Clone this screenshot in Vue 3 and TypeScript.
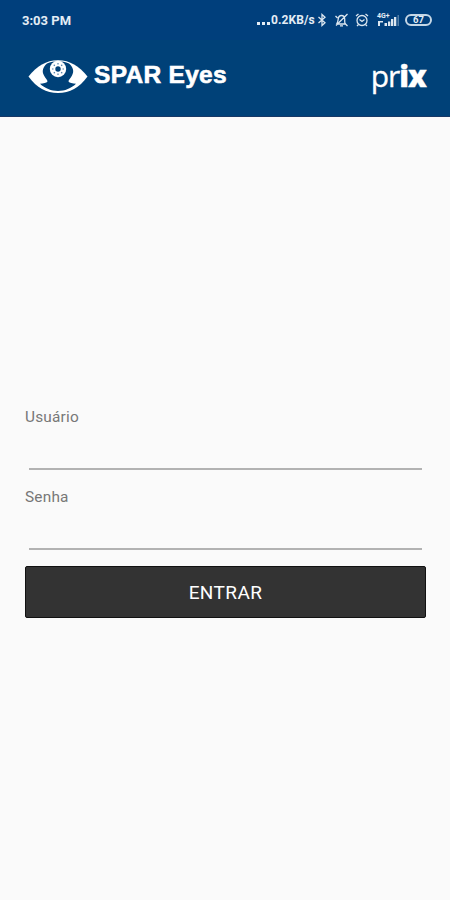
<script setup lang="ts">
import { ref } from 'vue'

const user = ref('')
const password = ref('')
const ticks = Array.from({ length: 8 }, (_, i) => i * 45)
</script>

<template>
  <main class="screen">
    <div class="status">
      <span class="time">3:03 PM</span>
      <span class="dots"><i></i><i></i><i></i></span>
      <span class="speed">0.2KB/s</span>
      <svg class="bt" width="10" height="14" viewBox="0 0 10 14">
        <path d="M1.5 4 8 9.8 5 12.5V1.5L8 4.2 1.5 10" />
      </svg>
      <svg class="bell" width="15" height="14" viewBox="0 0 15 14">
        <path d="M2.500 11h9c-1.500-1.500-.5-3-.8-5C10.500 3.500 9 2.500 7.500 2.500S4.500 3.500 4.200 6C4 8 4 9.500 2.500 11M6 12.800h3M1.500 3l2 2M11.500 11l2 2M13.500 1 2 12.500" />
      </svg>
      <svg class="alarm" width="14" height="14" viewBox="0 0 14 14">
        <circle cx="7" cy="7.500" r="5" /><path d="M1 3 3.500 1M13 3 10.500 1M4.500 6.500 7 8.500l2.500-2M3.500 11.500 2 13M10.500 11.500 12 13" />
      </svg>
      <span class="signal">
        <span class="net">4G+</span>
        <svg width="23" height="13" viewBox="0 0 23 13">
          <path class="fill" d="M1 7h5v1.500H3V12H1zM7.500 9H10v3H7.500zM11 7.500h2.300V12H11zM14 5h2.300v7H14zM17 3h2.300v9H17z" />
          <path class="faint" d="M20.500 1h1.500v11h-1.500z" />
        </svg>
      </span>
      <span class="battery"><b>67</b></span>
    </div>

    <header class="header">
      <svg class="eye" width="60" height="34" viewBox="0 0 60 34">
        <path class="white" d="M.5 16.500C9 6 18 .2 30 .2S51 6 59.500 16.500C51 28 42 33 30 33S9 28 .5 16.500Z" />
        <path class="navy" d="M19 3.500C22.500 2 26 1.300 30 1.300S37.500 2 41 3.500C45 7 46.500 11 44 15.500c-1.500 3-3.500 4.500-3.500 6 1 1.500 4 1.800 7.500 2.300C43 28.500 37 31 30 31S17 28.500 12 23.800c3.500-.5 6.500-.8 7.500-2.300 0-1.500-2-3-3.500-6C13.500 11 15 7 19 3.500Z" />
        <circle class="white" cx="30" cy="9" r="8.200" />
        <circle class="navy" cx="30" cy="9" r="2.700" />
        <path v-for="angle in ticks" :key="angle" class="tick" d="M30 3V4.500" :transform="`rotate(${angle} 30 9)`" />
      </svg>
      <h1 class="title">SPAR Eyes</h1>
      <div class="brand">pr<b>ix</b></div>
    </header>

    <form class="form" @submit.prevent>
      <label class="label" for="user">Usuário</label>
      <input id="user" v-model="user" class="input" type="text" />
      <label class="label second" for="password">Senha</label>
      <input id="password" v-model="password" class="input" type="password" />
      <button class="submit" type="submit">ENTRAR</button>
    </form>
  </main>
</template>

<style>
body { background: #fafafa; }
</style>

<style scoped>
.screen { width: 450px; height: 900px; background: #fafafa; font-family: Roboto, sans-serif; overflow: hidden; }
.status { box-sizing: border-box; height: 40px; background: #003f7c; display: flex; align-items: center; padding: 0 18px 0 22px; color: #e4edf5; }
.time { font-size: 13px; font-weight: 700; margin-right: auto; }
.dots { display: flex; gap: 2px; padding: 7px 1px 0 0; }
.dots i { width: 3px; height: 3px; background: #e4edf5; }
.speed { font-size: 12px; font-weight: 700; width: 46px; letter-spacing: .1px; }
svg { display: block; fill: none; flex: none; }
.status svg { stroke: #dce7f0; stroke-width: 1.300; }
.bell { margin-left: 7px; }
.alarm { margin-left: 6px; }
.signal { position: relative; margin-left: 8px; }
.status .signal .fill { fill: #dce7f0; stroke: none; }
.status .signal .faint { fill: #527fa8; stroke: none; }
.net { position: absolute; left: 0; top: -2px; font-size: 7px; line-height: 8px; font-weight: 700; }
.battery { box-sizing: border-box; margin-left: 5px; width: 27px; height: 12px; border: 2px solid #c5d7e6; border-radius: 6px; display: flex; justify-content: center; align-items: center; font-size: 9.500px; line-height: 10px; }
.header { box-sizing: border-box; height: 77px; background: #004178; border-bottom: 1px solid #173866; display: flex; padding: 0 24px 0 28px; }
.eye { margin-top: 20px; }
.white { fill: #fff; }
.navy { fill: #004178; }
.tick { stroke: #527fa8; stroke-width: 1.200; }
.title { margin: 20px 0 0 6px; font: 700 24.500px/30px "Liberation Sans", sans-serif; letter-spacing: .3px; color: #fff; -webkit-text-stroke: .6px #fff; white-space: nowrap; }
.brand { margin: 18px 0 0 auto; font: 400 30px/36px "Open Sans", sans-serif; letter-spacing: -1px; color: #fff; -webkit-text-stroke: .3px #fff; }
.brand b { font-weight: 800; }
.form { display: flex; flex-direction: column; padding: 291px 24px 0 25px; }
.label { height: 18px; line-height: 18px; font-size: 15.400px; letter-spacing: .2px; color: #777; }
.second { margin-top: 18px; }
.input { box-sizing: border-box; margin: 0 4px; height: 44px; border: 0; border-bottom: 2px solid #b2b2b2; background: transparent; outline: 0; padding: 0; }
.submit { box-sizing: border-box; height: 52px; margin-top: 16px; padding: 0; border: 1px solid #111; border-radius: 2px; background: #333; color: #fff; font: 400 19px Roboto, sans-serif; letter-spacing: .4px; }
</style>
